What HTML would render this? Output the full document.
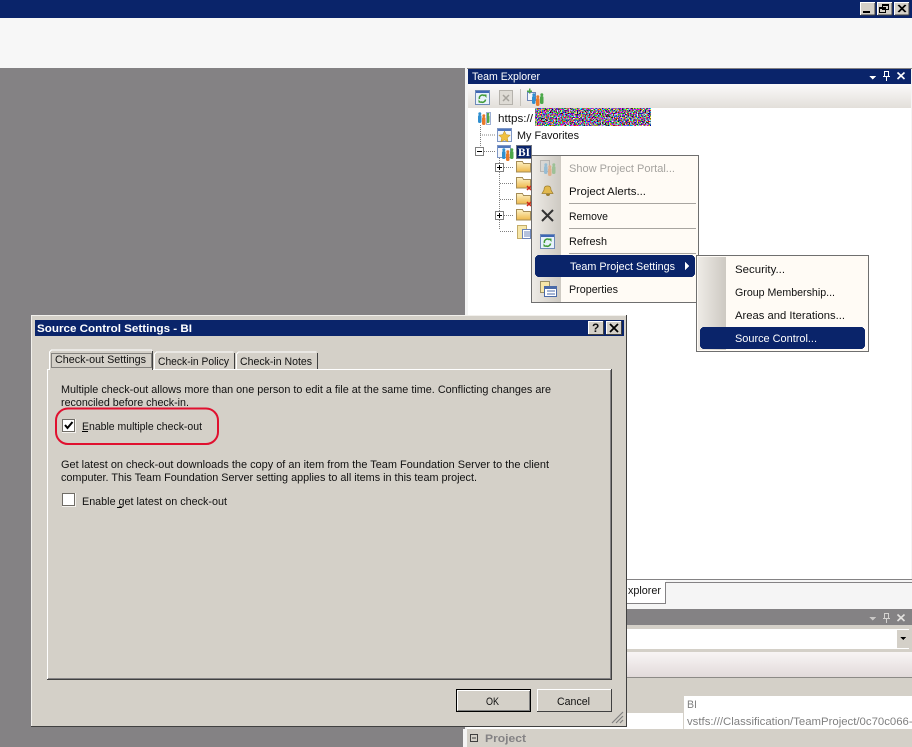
<!DOCTYPE html>
<html>
<head>
<meta charset="utf-8">
<title>Source Control Settings - BI</title>
<style>
html,body{margin:0;padding:0;background:#848284;width:912px;height:747px;overflow:hidden}
svg{display:block}
text{font-family:"Liberation Sans",sans-serif;font-size:11px;fill:#111}
.w{fill:#fff}
.g{fill:#a5a39f}
.b{font-weight:bold}
</style>
</head>
<body>
<svg width="912" height="747" viewBox="0 0 912 747" xmlns="http://www.w3.org/2000/svg" shape-rendering="crispEdges">
<defs>
<linearGradient id="strip" x1="0" x2="1" y1="0" y2="0"><stop offset="0" stop-color="#eeebe6"/><stop offset="1" stop-color="#cdc9c2"/></linearGradient>
<linearGradient id="tb" x1="0" x2="0" y1="0" y2="1"><stop offset="0" stop-color="#fbfafa"/><stop offset="1" stop-color="#e3dfda"/></linearGradient>
<linearGradient id="pg" x1="0" x2="0" y1="0" y2="1"><stop offset="0" stop-color="#f8f5f5"/><stop offset="1" stop-color="#e2dada"/></linearGradient>
<linearGradient id="fold" x1="0" x2="0" y1="0" y2="1"><stop offset="0" stop-color="#fdf3c8"/><stop offset="1" stop-color="#eeb84a"/></linearGradient>
<filter id="noise" x="0" y="0" width="100%" height="100%" color-interpolation-filters="sRGB"><feTurbulence type="fractalNoise" baseFrequency="0.75" numOctaves="1" seed="7"/><feColorMatrix type="matrix" values="7 0 0 0 -3  0 7 0 0 -3.100  0 0 7 0 -2.900  0 0 0 0 1"/></filter>
<g id="folder"><path d="M.5 1.500h6l1 2h7v8.500H.5z" fill="url(#fold)" stroke="#a58c56"/></g>
<g id="people" shape-rendering="auto">
<rect x="0" y="3" width="3.500" height="8" rx="1.500" fill="#2f8fd0"/><circle cx="1.800" cy="1.800" r="1.500" fill="#2f8fd0"/>
<rect x="4" y="5" width="3.500" height="8" rx="1.500" fill="#e8792a"/><circle cx="5.800" cy="3.800" r="1.500" fill="#e8792a"/>
<rect x="8" y="3" width="3.500" height="8" rx="1.500" fill="#4ca84a"/><circle cx="9.800" cy="1.800" r="1.500" fill="#4ca84a"/>
</g>
<g id="team"><rect x="0.500" y="0.500" width="13" height="12" fill="#f3f6fb" stroke="#7e96c4"/><rect x="1" y="1" width="12" height="2" fill="#4f76bd"/><use href="#people" x="5" y="3"/></g>
<g id="refresh"><rect x="0.500" y="0.500" width="14" height="14" fill="#e8f2fb" stroke="#6f8ab8"/><rect x="1" y="1" width="13" height="2" fill="#3f67b5"/><g fill="none" stroke="#3f9a35" stroke-width="1.500" shape-rendering="auto"><path d="M4.500 9a3 3 0 0 1 5-3"/><path d="M10.500 9.500a3 3 0 0 1-5 2"/></g><path d="M8.500 4.500h3v3.500zM6.500 13l-3-.5v-3z" fill="#3f9a35" shape-rendering="auto"/></g>
</defs>

<!-- application chrome -->
<rect width="912" height="747" fill="#848284"/>
<rect width="912" height="18" fill="#0a246a"/>
<rect y="18" width="912" height="50" fill="#f7f7f7"/>
<g>
<rect x="860" y="2" width="15" height="13" fill="#d4d0c8"/>
<rect x="877" y="2" width="15" height="13" fill="#d4d0c8"/>
<rect x="894" y="2" width="15" height="13" fill="#d4d0c8"/>
<path d="M860 15h15M875 2v13M877 15h15M892 2v13M894 15h15M909 2v13" stroke="#404040" fill="none"/>
<path d="M860 2.500h15M860.500 2v13M877 2.500h15M877.500 2v13M894 2.500h15M894.500 2v13" stroke="#fff" fill="none"/>
<rect x="863" y="11" width="7" height="2" fill="#000"/>
<path d="M882.500 4.500h6v5h-6zM882.500 5.500h6M879.500 7.500h6v5h-6zM879.500 8.500h6" stroke="#000" fill="#d4d0c8"/>
<path d="M898 5l7 7M905 5l-7 7M899 5l7 7M906 5l-7 7" stroke="#000" fill="none" shape-rendering="auto"/>
</g>

<!-- team explorer -->
<rect x="465" y="68" width="447" height="679" fill="#f4f4f4"/>
<rect x="467" y="68" width="445" height="1" fill="#848284"/>
<rect x="468" y="69" width="443" height="15" fill="#0a246a"/>
<text class="w" x="472" y="80" textLength="68" lengthAdjust="spacingAndGlyphs">Team Explorer</text>
<path d="M869 76h7l-3.500 3.500z" fill="#fff"/>
<path d="M884.500 71.500h4v5h-4zM883 76.500h7M886.500 77v4" stroke="#fff" fill="none"/>
<path d="M897.500 72.500l7 6.500M904.500 72.500l-7 6.500" stroke="#fff" stroke-width="1.600" fill="none" shape-rendering="auto"/>
<rect x="468" y="84" width="443" height="24" fill="url(#tb)"/>
<use href="#refresh" x="475" y="90"/>
<rect x="499.500" y="90.500" width="13" height="14" fill="#dedbd5" stroke="#b5b2ac"/>
<path d="M503 95l6 6M509 95l-6 6" stroke="#a5a29c" stroke-width="1.500" fill="none" shape-rendering="auto"/>
<rect x="520" y="89" width="1" height="17" fill="#c4c1ba"/>
<rect x="527.500" y="92.500" width="8" height="8" fill="#f3f6fb" stroke="#6b84b8"/>
<use href="#people" x="532" y="93"/>
<path d="M527 91h5M529.500 88.500v5" stroke="#4ca84a" stroke-width="1.500" fill="none"/>
<rect x="468" y="108" width="443" height="471" fill="#fff"/>

<!-- tree -->
<g stroke="#808080" stroke-dasharray="1 1" fill="none">
<path d="M480.500 125v22M480 135h15M484 151.500h12M499.500 158v72M504 167.500h10M500 183.500h14M500 199.500h14M504 215.500h10M500 231.500h14"/>
</g>
<use href="#people" x="478" y="112"/>
<rect x="486.500" y="112.500" width="4" height="12" fill="none" stroke="#9db0d4"/>
<text x="498" y="122" textLength="35" lengthAdjust="spacingAndGlyphs">https://</text>
<rect x="535" y="108" width="116" height="18" fill="#888" filter="url(#noise)"/>
<rect x="497.500" y="128.500" width="14" height="13" fill="#f3f6fb" stroke="#7e96c4"/>
<rect x="498" y="129" width="13" height="2" fill="#4f76bd"/>
<path d="M504.500 131l1.800 3.700 4 .5-3 2.700.8 4-3.600-2-3.600 2 .8-4-3-2.700 4-.5z" fill="#f0c040" stroke="#b98d25" stroke-width=".5" shape-rendering="auto"/>
<text x="517" y="139" textLength="62" lengthAdjust="spacingAndGlyphs">My Favorites</text>
<rect x="475.500" y="147.500" width="8" height="8" fill="#fff" stroke="#808080"/>
<path d="M477 151.500h5" stroke="#000"/>
<use href="#team" x="497" y="145"/>
<rect x="516" y="145" width="16" height="14" fill="#0a246a"/>
<rect x="516.500" y="145.500" width="15" height="13" fill="none" stroke="#d8c89a" stroke-dasharray="1 1"/>
<text class="w b" x="518" y="156" textLength="12" lengthAdjust="spacingAndGlyphs" style="font-family:'Liberation Serif',serif;font-size:12px">BI</text>
<g>
<rect x="495.500" y="163.500" width="8" height="8" fill="#fff" stroke="#808080"/><path d="M497 167.500h5M499.500 165v5" stroke="#000"/>
<rect x="495.500" y="211.500" width="8" height="8" fill="#fff" stroke="#808080"/><path d="M497 215.500h5M499.500 213v5" stroke="#000"/>
<use href="#folder" x="516" y="160"/>
<use href="#folder" x="516" y="176"/>
<use href="#folder" x="516" y="192"/>
<use href="#folder" x="516" y="208"/>
<path d="M527 186l4 4M531 186l-4 4M527 202l4 4M531 202l-4 4" stroke="#d02818" stroke-width="1.500" fill="none" shape-rendering="auto"/>
<rect x="517.500" y="225.500" width="9" height="13" fill="#f6e6a8" stroke="#c4ad6a"/>
<rect x="522.500" y="229.500" width="8" height="9" fill="#fff" stroke="#6b84b8"/>
<path d="M524 232h6M524 234h6M524 236h6" stroke="#6b84b8"/>
</g>

<!-- context menu -->
<rect x="531.500" y="155.500" width="167" height="147" fill="#fffbf5" stroke="#6f6f6f"/>
<rect x="532" y="156" width="29" height="146" fill="url(#strip)"/>
<g opacity=".4"><rect x="540.500" y="160.500" width="9" height="11" fill="#ccc" stroke="#777"/><use href="#people" x="544" y="163"/></g>
<g shape-rendering="auto">
<path d="M548 186c2.500 0 3 2 3 4l2 3.500h-11l2-3.500c0-2 .5-4 3-4z" fill="#e2b94e" stroke="#9a7c2c" stroke-width=".7"/>
<path d="M546 194a2 2 0 0 0 4 0z" fill="#9a7c2c"/>
<path d="M542 210l11 11M553 210l-11 11" stroke="#333" stroke-width="2" fill="none"/>
</g>
<use href="#refresh" x="540" y="234"/>
<rect x="540.500" y="281.500" width="9" height="11" fill="#f6e6a8" stroke="#9a9067"/>
<rect x="544.500" y="286.500" width="12" height="10" fill="#fff" stroke="#4a6aa8"/>
<rect x="545" y="287" width="11" height="2" fill="#4a6aa8"/>
<path d="M547 291h8M547 294h8" stroke="#4a6aa8"/>
<text class="g" x="569" y="172" textLength="106" lengthAdjust="spacingAndGlyphs">Show Project Portal...</text>
<text x="569" y="195" textLength="77" lengthAdjust="spacingAndGlyphs">Project Alerts...</text>
<rect x="569" y="203" width="127" height="1" fill="#a8a5a0"/>
<text x="569" y="220" textLength="39" lengthAdjust="spacingAndGlyphs">Remove</text>
<rect x="569" y="228" width="127" height="1" fill="#a8a5a0"/>
<text x="569" y="245" textLength="38" lengthAdjust="spacingAndGlyphs">Refresh</text>
<rect x="569" y="253" width="127" height="1" fill="#a8a5a0"/>
<rect x="535" y="255" width="160" height="22" rx="4" fill="#0a246a"/>
<text class="w" x="570" y="270" textLength="105" lengthAdjust="spacingAndGlyphs">Team Project Settings</text>
<path d="M685 262l4 4-4 4z" fill="#fff"/>
<text x="569" y="293" textLength="49" lengthAdjust="spacingAndGlyphs">Properties</text>

<!-- submenu -->
<rect x="696.500" y="255.500" width="172" height="96" fill="#fffbf5" stroke="#6f6f6f"/>
<rect x="698" y="257" width="28" height="93" fill="url(#strip)"/>
<text x="735" y="273" textLength="50" lengthAdjust="spacingAndGlyphs">Security...</text>
<text x="735" y="296" textLength="100" lengthAdjust="spacingAndGlyphs">Group Membership...</text>
<text x="735" y="319" textLength="110" lengthAdjust="spacingAndGlyphs">Areas and Iterations...</text>
<rect x="700" y="327" width="165" height="22" rx="4" fill="#0a246a"/>
<text class="w" x="735" y="342" textLength="82" lengthAdjust="spacingAndGlyphs">Source Control...</text>

<!-- tab strip -->
<rect x="467" y="579" width="445" height="1" fill="#848284"/>
<rect x="467" y="580" width="445" height="29" fill="#f5f5f5"/>
<rect x="666" y="582" width="246" height="1" fill="#848284"/>
<rect x="467" y="580" width="199" height="23" fill="#fff"/>
<path d="M665.500 582v21.500H467" stroke="#848284" fill="none"/>
<text x="628" y="594" textLength="33" lengthAdjust="spacingAndGlyphs">xplorer</text>

<!-- properties -->
<rect x="467" y="609" width="445" height="16" fill="#848284"/>
<path d="M869 617h7l-3.500 3.500z" fill="#c9c7c6"/>
<path d="M884.500 613.500h4v5h-4zM883 618.500h7M886.500 619v4" stroke="#d4d2d0" fill="none"/>
<path d="M897.500 614.500l7 6.500M904.500 614.500l-7 6.500" stroke="#e4e2e0" stroke-width="1.600" fill="none" shape-rendering="auto"/>
<rect x="467" y="625" width="445" height="122" fill="#d4d0c8"/>
<rect x="467" y="629" width="442" height="20" fill="#fff"/>
<rect x="897" y="630" width="12" height="18" fill="#d4d0c8"/>
<path d="M900 637h6l-3 3z" fill="#000"/>
<rect x="467" y="652" width="445" height="25" fill="url(#pg)"/>
<rect x="467" y="677" width="445" height="1" fill="#8c8a86"/>
<rect x="684" y="696" width="228" height="17" fill="#fff"/>
<text x="687" y="708" textLength="10" lengthAdjust="spacingAndGlyphs" style="fill:#808080">BI</text>
<rect x="467" y="713" width="445" height="16" fill="#fff"/>
<rect x="683" y="713" width="1" height="16" fill="#d4d0c8"/>
<text x="687" y="725" textLength="232" lengthAdjust="spacingAndGlyphs" style="fill:#808080">vstfs:///Classification/TeamProject/0c70c066-9</text>
<rect x="463" y="729" width="4" height="18" fill="#f4f4f4"/>
<rect x="470.500" y="734.500" width="7" height="7" fill="none" stroke="#404040"/>
<path d="M472 738h4" stroke="#404040"/>
<text class="b" x="485" y="742" textLength="41" lengthAdjust="spacingAndGlyphs" style="fill:#848284">Project</text>

<!-- dialog -->
<rect x="31" y="315" width="596" height="412" fill="#d4d0c8"/>
<path d="M31.500 727V315.500H627" stroke="#f2f0ec" fill="none"/>
<path d="M31 726.500h596M626.500 315v412" stroke="#404040" fill="none"/>
<rect x="35" y="320" width="589" height="16" fill="#0a246a"/>
<text class="w b" x="37" y="332" textLength="155" lengthAdjust="spacingAndGlyphs">Source Control Settings - BI</text>
<rect x="588" y="321" width="16" height="14" fill="#d4d0c8"/>
<rect x="606" y="321" width="16" height="14" fill="#d4d0c8"/>
<path d="M588 321.500h16M588.500 321v14M606 321.500h16M606.500 321v14" stroke="#fff" fill="none"/>
<path d="M588 334.500h16M603.500 321v14M606 334.500h16M621.500 321v14" stroke="#404040" fill="none"/>
<text class="b" x="592" y="332" style="font-size:12px">?</text>
<path d="M610 324l8 8M618 324l-8 8" stroke="#000" stroke-width="1.800" fill="none" shape-rendering="auto"/>

<!-- tab panel -->
<rect x="47.500" y="369.500" width="564" height="310" fill="#d4d0c8" stroke="#fff"/>
<path d="M47 679.500h565M611.500 369v311" stroke="#404040" fill="none"/>
<path d="M48 678.500h563M610.500 370v309" stroke="#848284" fill="none"/>
<path d="M49.500 370v-18l2-2h100l1 2v18" fill="#d4d0c8" stroke="#fff"/>
<path d="M152.500 351v19" stroke="#404040"/>
<rect x="51.500" y="353.500" width="100" height="14" fill="none" stroke="#333" stroke-dasharray="1 1"/>
<text x="55" y="363" textLength="91" lengthAdjust="spacingAndGlyphs">Check-out Settings</text>
<path d="M154.500 369v-15l2-2h77" fill="none" stroke="#fff"/>
<path d="M234.500 353v16" stroke="#404040"/>
<text x="158" y="365" textLength="71" lengthAdjust="spacingAndGlyphs">Check-in Policy</text>
<path d="M236.500 369v-15l2-2h78" fill="none" stroke="#fff"/>
<path d="M317.500 353v16" stroke="#404040"/>
<text x="240" y="365" textLength="72" lengthAdjust="spacingAndGlyphs">Check-in Notes</text>

<text x="61" y="393" textLength="490" lengthAdjust="spacingAndGlyphs">Multiple check-out allows more than one person to edit a file at the same time. Conflicting changes are</text>
<text x="61" y="406" textLength="128" lengthAdjust="spacingAndGlyphs">reconciled before check-in.</text>
<rect x="62.500" y="419.500" width="12" height="12" fill="#fff" stroke="#6f6c66"/>
<path d="M62 432.500h13M75.500 419v14" stroke="#f4f2ee" fill="none"/>
<path d="M65 425l2.500 3 5-6" stroke="#000" stroke-width="2" fill="none" shape-rendering="auto"/>
<text x="82" y="430" textLength="120" lengthAdjust="spacingAndGlyphs">Enable multiple check-out</text>
<rect x="82" y="431" width="6" height="1" fill="#000"/>
<rect x="56" y="408.500" width="162" height="35.500" rx="12" fill="none" stroke="#e0102f" stroke-width="2" shape-rendering="auto"/>

<text x="61" y="468" textLength="488" lengthAdjust="spacingAndGlyphs">Get latest on check-out downloads the copy of an item from the Team Foundation Server to the client</text>
<text x="61" y="481" textLength="416" lengthAdjust="spacingAndGlyphs">computer. This Team Foundation Server setting applies to all items in this team project.</text>
<rect x="62.500" y="493.500" width="12" height="12" fill="#fff" stroke="#6f6c66"/>
<path d="M62 506.500h13M75.500 493v14" stroke="#f4f2ee" fill="none"/>
<text x="82" y="505" textLength="145" lengthAdjust="spacingAndGlyphs">Enable get latest on check-out</text>
<rect x="117" y="507" width="5" height="1" fill="#000"/>

<!-- buttons -->
<rect x="456.500" y="689.500" width="74" height="22" fill="#d4d0c8" stroke="#000"/>
<path d="M458 710.500h72M529.500 691v20" stroke="#808080" fill="none"/>
<path d="M457.500 710V690.500H530" stroke="#fff" fill="none"/>
<text x="486" y="705" textLength="13" lengthAdjust="spacingAndGlyphs">OK</text>
<rect x="537" y="689" width="75" height="23" fill="#d4d0c8"/>
<path d="M537.500 712V689.500H612" stroke="#fff" fill="none"/>
<path d="M537 711.500h75M611.500 689v23" stroke="#404040" fill="none"/>
<text x="557" y="705" textLength="33" lengthAdjust="spacingAndGlyphs">Cancel</text>
<path d="M612 723l11-11M616 723l7-7M620 723l3-3" stroke="#808080" stroke-width="1.200" fill="none" shape-rendering="auto"/>
</svg>
</body>
</html>
